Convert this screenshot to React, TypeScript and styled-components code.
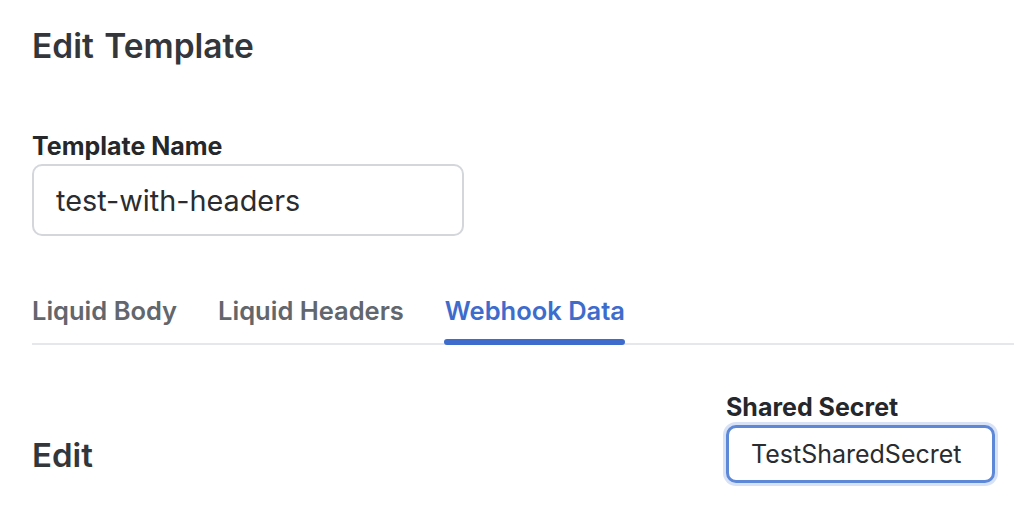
import React from "react";
import styled, { createGlobalStyle } from "styled-components";

const Global = createGlobalStyle`
  html, body { margin: 0; padding: 0; background: #ffffff; }
  body { font-family: Inter, "Noto Sans", sans-serif; color: #2b2d31; overflow: hidden; }
  * { box-sizing: border-box; }
`;

const Page = styled.div`
  width: 1014px;
  height: 510px;
  padding: 22px 0 0 32px;
  display: flex;
  flex-direction: column;
`;

const Title = styled.h1`
  margin: 0;
  font-size: 33.5px;
  line-height: 48px;
  font-weight: 600;
  color: #33363b;
  word-spacing: 2px;
`;

const Field = styled.div<{ $top?: number }>`
  display: flex;
  flex-direction: column;
  gap: 3px;
  margin-top: ${(p) => p.$top ?? 0}px;
`;

const Label = styled.label`
  font-size: 25px;
  line-height: 30px;
  font-weight: 700;
  color: #25272b;
`;

const TextInput = styled.input<{ $focused?: boolean; $w: number; $h: number; $size: number }>`
  width: ${(p) => p.$w}px;
  height: ${(p) => p.$h}px;
  font-family: Inter, "Noto Sans", sans-serif;
  font-size: ${(p) => p.$size}px;
  color: #2a2c30;
  padding: 0 22px;
  border-radius: 10px;
  outline: none;
  background: #fff;
  border: ${(p) => (p.$focused ? "3px solid #5d88d8" : "2px solid #d3d6db")};
  box-shadow: ${(p) => (p.$focused ? "0 0 0 3px #d8e2f6" : "none")};
`;

const Tabs = styled.div`
  display: flex;
  gap: 41px;
  margin-top: 59px;
  border-bottom: 2px solid #e6e7ea;
`;

const Tab = styled.div<{ $active?: boolean }>`
  position: relative;
  font-size: 25.5px;
  line-height: 32px;
  font-weight: 600;
  padding-bottom: 16px;
  color: ${(p) => (p.$active ? "#3e6ccd" : "#62666d")};
  &::after {
    content: "";
    display: ${(p) => (p.$active ? "block" : "none")};
    position: absolute;
    left: -1px;
    right: 0;
    bottom: -2px;
    height: 6px;
    border-radius: 3px;
    background: #3e6ccd;
  }
`;

const EditRow = styled.div`
  display: flex;
  justify-content: space-between;
  align-items: flex-end;
  padding-right: 19px;
  margin-top: 47px;
`;

const SubTitle = styled.h2`
  margin: 0 0 4px;
  font-size: 33px;
  line-height: 48px;
  font-weight: 600;
  color: #33363b;
`;

export default function App() {
  return (
    <>
      <Global />
      <Page>
        <Title>Edit Template</Title>
        <Field $top={61}>
          <Label>Template Name</Label>
          <TextInput $w={432} $h={72} $size={28.8} defaultValue="test-with-headers" />
        </Field>
        <Tabs>
          <Tab>Liquid Body</Tab>
          <Tab>Liquid Headers</Tab>
          <Tab $active>Webhook Data</Tab>
        </Tabs>
        <EditRow>
          <SubTitle>Edit</SubTitle>
          <Field>
            <Label>Shared Secret</Label>
            <TextInput $focused $w={269} $h={58} $size={25} defaultValue="TestSharedSecret" />
          </Field>
        </EditRow>
      </Page>
    </>
  );
}
